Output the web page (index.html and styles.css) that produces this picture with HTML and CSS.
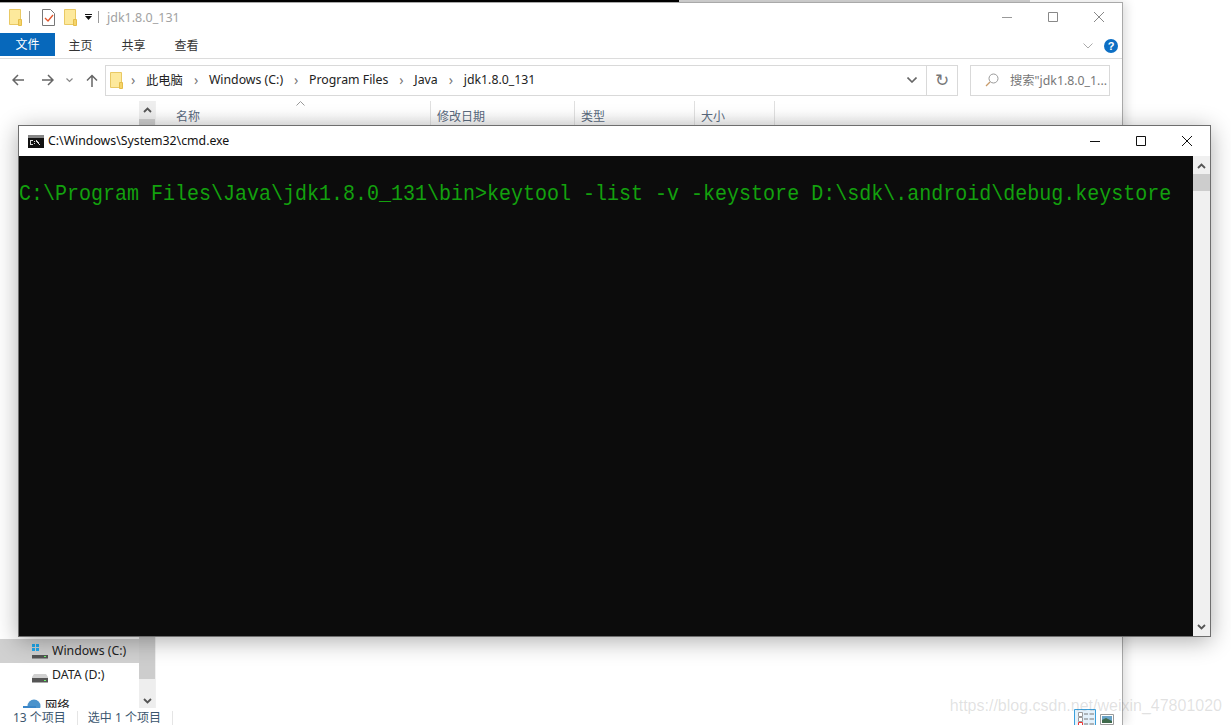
FILE: index.html
```html
<!DOCTYPE html>
<html lang="zh">
<head>
<meta charset="utf-8">
<title>cmd</title>
<link rel="stylesheet" href="styles.css">
</head>
<body>
<div class="topstrip"><div class="strip-black"></div><div class="strip-gray"></div></div>

<section class="explorer">
  <header class="ex-title">
    <svg class="ic-folder" viewBox="0 0 13 17"><path d="M.5.5h11v15H.5z" fill="#fde99c" stroke="#e9c964"/><path d="M9.5 10.500h3v6h-3z" fill="#f5d469" stroke="#e5bd4a"/></svg>
    <span class="sep"></span>
    <svg class="ic-check" viewBox="0 0 13 17"><path d="M.5.5h8l4 4v12H.5z" fill="#fff" stroke="#777"/><path d="M3 9l3 3 5-6" fill="none" stroke="#e2542a" stroke-width="1.300"/></svg>
    <svg class="ic-folder ic-folder2" viewBox="0 0 13 17"><path d="M.5.5h11v15H.5z" fill="#fde99c" stroke="#e9c964"/><path d="M9.5 10.500h3v6h-3z" fill="#f5d469" stroke="#e5bd4a"/></svg>
    <svg class="ic-qa" viewBox="0 0 7 6"><path d="M0 0h7v1H0zM0 2h7L3.500 6z" fill="#111"/></svg>
    <span class="sep sep2"></span>
    <span class="ex-name">jdk1.8.0_131</span>
    <div class="win-btns">
      <svg class="wb" viewBox="0 0 46 30"><path d="M18 17.500h10" stroke="#999" fill="none"/></svg>
      <svg class="wb" viewBox="0 0 46 30"><path d="M18.500 12.500h9v9h-9z" stroke="#888" fill="none"/></svg>
      <svg class="wb" viewBox="0 0 46 30"><path d="M18 12l10 10M28 12L18 22" stroke="#888" fill="none"/></svg>
    </div>
  </header>

  <nav class="ribbon">
    <span class="tab tab-file">文件</span>
    <span class="tab">主页</span>
    <span class="tab">共享</span>
    <span class="tab">查看</span>
    <span class="ribbon-end">
      <svg class="ic-collapse" viewBox="0 0 10 6"><path d="M.5.500L5 5 9.500.5" fill="none" stroke="#aaa"/></svg>
      <span class="help">?</span>
    </span>
  </nav>

  <div class="addr-row">
    <svg class="nav-ic nav-back" viewBox="0 0 13 12"><path d="M12 6H1.500M6 1L1 6l5 5" fill="none" stroke="#666" stroke-width="1.500"/></svg>
    <svg class="nav-ic nav-fwd" viewBox="0 0 13 12"><path d="M1 6h10.500M7 1l5 5-5 5" fill="none" stroke="#666" stroke-width="1.500"/></svg>
    <svg class="nav-down" viewBox="0 0 7 5"><path d="M.5.500l3 3 3-3" fill="none" stroke="#888" stroke-width="1.200"/></svg>
    <svg class="nav-ic nav-up" viewBox="0 0 12 13"><path d="M6 13V1.500M1 6.500l5-5 5 5" fill="none" stroke="#666" stroke-width="1.500"/></svg>
    <div class="addr">
      <svg class="ic-folder addr-folder" viewBox="0 0 13 17"><path d="M.5.500h11v15H.5z" fill="#fde99c" stroke="#e9c964"/><path d="M9.500 10.500h3v6h-3z" fill="#f5d469" stroke="#e5bd4a"/></svg>
      <span class="crumb-arrow">›</span><span class="crumb">此电脑</span>
      <span class="crumb-arrow">›</span><span class="crumb">Windows (C:)</span>
      <span class="crumb-arrow">›</span><span class="crumb">Program Files</span>
      <span class="crumb-arrow">›</span><span class="crumb">Java</span>
      <span class="crumb-arrow">›</span><span class="crumb">jdk1.8.0_131</span>
      <span class="addr-end">
        <svg class="addr-chev" viewBox="0 0 10 6"><path d="M.5.500L5 5 9.500.5" fill="none" stroke="#666" stroke-width="1.600"/></svg>
      </span>
      <span class="addr-refresh">↻</span>
    </div>
    <div class="search">
      <svg class="search-ic" viewBox="0 0 14 14"><circle cx="8.500" cy="5.500" r="4.500" fill="none" stroke="#999"/><path d="M5 9l-4 4" stroke="#c89b6a" fill="none" stroke-width="1.200"/></svg>
      <span class="search-text">搜索"jdk1.8.0_1...</span>
    </div>
  </div>

  <div class="ex-body">
    <aside class="tree">
      <div class="tree-items">
        <div class="tree-row tree-sel">
          <svg class="drive" viewBox="0 0 16 15"><path d="M0 0h3v3H0zM4 0h3v3H4zM0 4h3v3H0zM4 4h3v3H4z" fill="#1fa8ec"/><path d="M2 8h12l2 3v3.500H0V11z" fill="#d0d0d0"/><path d="M0 11h16v3.500H0z" fill="#555"/><path d="M12 12h2v1h-2z" fill="#6f6"/></svg>
          <span>Windows (C:)</span>
        </div>
        <div class="tree-row">
          <svg class="drive" viewBox="0 0 16 15"><path d="M2 6h12l2 3v5H0V9z" fill="#d0d0d0"/><path d="M0 10h16v4.500H0z" fill="#555"/><path d="M12 12h2v1h-2z" fill="#6f6"/></svg>
          <span>DATA (D:)</span>
        </div>
        <div class="tree-row tree-net">
          <svg class="net" viewBox="0 0 18 14"><circle cx="11" cy="7" r="6.500" fill="#4b93cc"/><path d="M0 7h13v7H0z" fill="#3a86c8"/></svg>
          <span>网络</span>
        </div>
      </div>
      <div class="vbar">
        <svg class="vbar-arrow" viewBox="0 0 9 6"><path d="M1 5l3.500-3.500L8 5" fill="none" stroke="#555" stroke-width="1.800"/></svg>
        <div class="vbar-track"><div class="vbar-thumb"></div></div>
        <svg class="vbar-arrow" viewBox="0 0 9 6"><path d="M1 1l3.500 3.500L8 1" fill="none" stroke="#555" stroke-width="1.800"/></svg>
      </div>
    </aside>
    <main class="files">
      <div class="sort-caret"><svg viewBox="0 0 9 5"><path d="M.5 4.500l4-4 4 4" fill="none" stroke="#999"/></svg></div>
      <div class="cols">
        <span class="col col-name">名称</span>
        <span class="col col-date">修改日期</span>
        <span class="col col-type">类型</span>
        <span class="col col-size">大小</span>
      </div>
    </main>
  </div>

  <footer class="status">
    <span class="st st-a">13 个项目</span>
    <span class="st st-b">选中 1 个项目</span>
    <span class="views">
      <svg class="view view-on" viewBox="0 0 22 16"><path d="M.5.500h21v20H.5z" fill="#e3f1fb" stroke="#3aa0dc"/><path d="M4.500 3.500h4v4h-4zM4.500 8.500h4v4h-4z" fill="#fff" stroke="#999"/><path d="M4.500 13.500h4v3h-4z" fill="#fff" stroke="#e33"/><path d="M10 5h4M15.500 5H20M10 10h4M15.500 10H20M10 15h4M15.500 15H20" stroke="#777"/></svg>
      <svg class="view view-off" viewBox="0 0 14 11"><path d="M.5.500h13v10H.5z" fill="#fff" stroke="#999"/><path d="M2 2h10v7H2z" fill="#6aa4c8"/><path d="M2 6l4-2 6 3v2H2z" fill="#3f6a4c"/></svg>
    </span>
  </footer>
</section>

<section class="cmd">
  <header class="cmd-title">
    <svg class="cmd-ic" viewBox="0 0 16 13"><path d="M0 0h16v13H0z" fill="#111"/><path d="M0 0h16v3H0z" fill="#888"/><path d="M2 5h3v1H3v3h2v1H2zM6 6h1v1H6zM6 8h1v1H6zM8 5h1v1h1v1h1v2h1v1h-1V9h-1V8H9V7H8z" fill="#ddd"/></svg>
    <span class="cmd-name">C:\Windows\System32\cmd.exe</span>
    <div class="cmd-btns">
      <svg class="cb" viewBox="0 0 46 30"><path d="M18 15.500h10" stroke="#111" fill="none"/></svg>
      <svg class="cb" viewBox="0 0 46 30"><path d="M18.500 10.500h9v9h-9z" stroke="#111" fill="none"/></svg>
      <svg class="cb" viewBox="0 0 46 30"><path d="M18 10l10 10M28 10L18 20" stroke="#111" fill="none"/></svg>
    </div>
  </header>
  <div class="cmd-body">
    <div class="console-wrap"><pre class="console">C:\Program Files\Java\jdk1.8.0_131\bin&gt;keytool -list -v -keystore D:\sdk\.android\debug.keystore</pre></div>
    <div class="cmd-scroll">
      <svg class="cmd-arrow" viewBox="0 0 9 6"><path d="M1 5l3.500-3.500L8 5" fill="none" stroke="#555" stroke-width="1.800"/></svg>
      <div class="cmd-track"><div class="cmd-thumb"></div></div>
      <svg class="cmd-arrow" viewBox="0 0 9 6"><path d="M1 1l3.500 3.500L8 1" fill="none" stroke="#555" stroke-width="1.800"/></svg>
    </div>
  </div>
</section>

<div class="watermark">https://blog.csdn.net/weixin_47801020</div>
</body>
</html>
```

FILE: styles.css
```css
* { box-sizing: border-box; }
html, body { margin: 0; padding: 0; width: 1231px; height: 725px; overflow: hidden; background: #fff; }
body { position: relative; font-family: "Liberation Sans", "Noto Sans CJK SC", sans-serif; color: #222; }

.topstrip { display: flex; height: 2px; }
.strip-black { width: 679px; background: #000; }
.strip-gray { width: 351px; background: #d6d6d6; }

/* explorer window */
.explorer {
  position: absolute; left: 0; top: 2px; width: 1123px; height: 723px;
  display: flex; flex-direction: column;
  background: #fff; border-right: 1px solid #a9a9a9; border-top: 1px solid #a9a9a9;
  box-shadow: 3px 0 10px rgba(0,0,0,.14);
  font-size: 13px; font-family: "Noto Sans", "Noto Sans CJK SC", sans-serif;
}
.ex-title { display: flex; align-items: center; height: 30px; padding: 0 0 2px 9px; flex: none; }
.ic-folder { width: 13px; height: 17px; flex: none; }
.sep { width: 1px; height: 12px; background: #999; margin: 0 12px 0 7px; flex: none; }
.ic-check { width: 13px; height: 17px; flex: none; }
.ic-folder2 { margin-left: 9px; }
.ic-qa { width: 7px; height: 6px; margin-left: 8px; flex: none; }
.sep2 { margin: 0 8px 0 6px; }
.ex-name { color: #a2a2a2; font-size: 12.500px; }
.win-btns { margin-left: auto; display: flex; }
.wb { width: 46px; height: 30px; margin-top: -4px; }

.ribbon { display: flex; align-items: flex-start; height: 26px; flex: none; border-bottom: 1px solid #dcdcdc; }
.tab { width: 53px; text-align: center; font-size: 12px; line-height: 25px; color: #333; }
.tab-file { width: 55px; height: 23px; line-height: 23px; background: #0768bb; color: #fff; margin-right: -1px; }
.ribbon-end { margin: 6px 4px 0 auto; display: flex; align-items: center; gap: 11px; }
.ic-collapse { width: 10px; height: 6px; }
.help { width: 14px; height: 14px; border-radius: 50%; background: #0d6fc4; color: #fff; font-size: 11px; font-weight: 700; line-height: 14px; text-align: center; font-family: "Liberation Sans", sans-serif; }

.addr-row { display: flex; align-items: center; height: 42px; flex: none; padding-left: 12px; }
.nav-ic { flex: none; }
.nav-back { width: 13px; height: 12px; }
.nav-fwd { width: 13px; height: 12px; margin-left: 16px; }
.nav-down { width: 7px; height: 5px; margin-left: 12px; }
.nav-up { width: 12px; height: 13px; margin-left: 13px; }
.addr {
  display: flex; align-items: center; width: 853px; height: 31px; margin-left: 7px;
  border: 1px solid #d9d9d9; padding-left: 4px; font-size: 12.300px; color: #222;
}
.addr-folder { margin-right: 8px; }
.crumb-arrow { color: #777; font-size: 14px; width: 6px; margin-right: 9px; line-height: 1; }
.crumb { margin: -1px 11px 0 0; white-space: nowrap; }
.addr-end { margin-left: auto; display: flex; align-items: center; padding-right: 9px; }
.addr-chev { width: 10px; height: 6px; }
.addr-refresh { width: 31px; height: 29px; border-left: 1px solid #d9d9d9; text-align: center; line-height: 28px; font-size: 17px; color: #777; font-family: "DejaVu Sans", sans-serif; }
.search {
  display: flex; align-items: center; width: 140px; height: 31px; margin-left: 12px;
  border: 1px solid #d9d9d9; padding-left: 14px; font-size: 12.300px; color: #777;
}
.search-ic { width: 14px; height: 14px; flex: none; margin-right: 11px; }
.search-text { white-space: nowrap; }

.ex-body { flex: 1; display: flex; min-height: 0; position: relative; }
.tree { width: 156px; flex: none; display: flex; border-right: 1px solid #f0f0f0; }
.tree-items { flex: 1; display: flex; flex-direction: column; justify-content: flex-end; font-size: 12.300px; color: #222; }
.tree-row { display: flex; align-items: center; height: 24px; padding: 0 0 2px 32px; gap: 4px; }
.tree-sel { background: #d1d1d1; }
.drive { width: 16px; height: 15px; flex: none; margin-top: 2px; }
.tree-net { padding: 9px 0 0 23px; height: 21px; gap: 4px; align-items: flex-start; overflow: hidden; }
.net { width: 18px; height: 14px; flex: none; margin-top: 3px; }
.vbar { width: 16px; flex: none; display: flex; flex-direction: column; background: #eee; align-items: center; }
.vbar-arrow { width: 9px; height: 6px; margin: 6px 0; flex: none; }
.vbar-track { flex: 1; width: 100%; display: flex; flex-direction: column; justify-content: flex-end; padding-bottom: 13px; }
.vbar-thumb { height: 560px; background: #cdcdcd; }

.files { flex: 1; position: relative; }
.sort-caret { position: absolute; left: 140px; top: 0; width: 9px; height: 5px; display: flex; }
.cols { display: flex; height: 26px; font-size: 12px; color: #5a6a7e; background: linear-gradient(#fff 40%, #f3f3f3); }
.col { border-right: 1px solid #e0e0e0; padding-left: 6px; padding-top: 6px; }
.col-name { width: 275px; padding-left: 20px; }
.col-date { width: 144px; }
.col-type { width: 120px; }
.col-size { width: 80px; }

.status { height: 17px; flex: none; display: flex; align-items: center; font-size: 12px; color: #3b566e; padding: 3px 0 0 13px; position: relative; }
.st { white-space: nowrap; line-height: 14px; }
.st-a { padding-right: 11px; border-right: 1px solid #e5e5e5; }
.st-b { padding: 0 11px 0 10px; border-right: 1px solid #e5e5e5; }
.views { margin: -3px 8px 0 auto; display: flex; align-items: flex-start; gap: 4px; height: 17px; }
.view-on { width: 22px; height: 16px; margin-top: 1px; }
.view-off { width: 14px; height: 11px; margin-top: 6px; }

/* console window, floating over the explorer */
.cmd {
  position: absolute; left: 18px; top: 125px; width: 1193px; height: 512px;
  display: flex; flex-direction: column;
  background: #fff; border: 1px solid #6e6e6e;
  box-shadow: 0 4px 22px rgba(0,0,0,.32);
}
.cmd-title { display: flex; align-items: center; height: 30px; flex: none; padding-left: 9px; }
.cmd-ic { width: 16px; height: 13px; flex: none; margin-right: 4px; }
.cmd-name { font-family: "Noto Sans", sans-serif; font-size: 12.300px; color: #111; padding-bottom: 1px; }
.cmd-btns { margin-left: auto; display: flex; }
.cb { width: 46px; height: 30px; }
.cmd-body { flex: 1; display: flex; min-height: 0; background: #0c0c0c; }
.console-wrap { flex: 1; min-width: 0; padding-top: 25px; }
.console {
  margin: 0; transform: scaleY(1.14); transform-origin: 0 0;
  font-family: "Liberation Mono", monospace; font-size: 20px; line-height: 24px; color: #13a10e; white-space: pre;
}
.cmd-scroll { width: 17px; flex: none; background: #f0f0f0; display: flex; flex-direction: column; align-items: center; }
.cmd-arrow { width: 9px; height: 6px; margin: 7px 0 6px; flex: none; }
.cmd-track { flex: 1; width: 100%; }
.cmd-thumb { height: 17px; background: #cdcdcd; margin-top: -1px; }

.watermark {
  position: absolute; right: 9px; top: 697px;
  font-family: "Liberation Sans", sans-serif; font-size: 16px; color: rgba(120,120,120,.22);
  white-space: nowrap; pointer-events: none;
}
```
